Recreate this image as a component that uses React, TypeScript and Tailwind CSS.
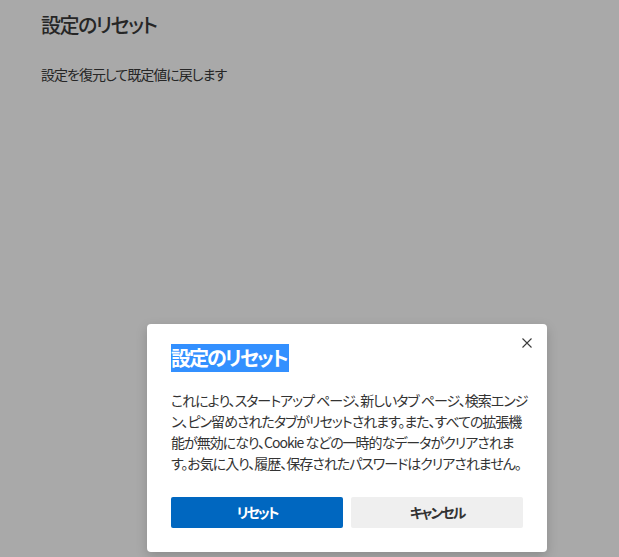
import React from "react";

const jp = "font-['Yu_Gothic_UI','Noto_Sans_CJK_JP',sans-serif] [font-feature-settings:'palt']";

export default function App() {
  return (
    <div className={`relative w-[619px] h-[557px] overflow-hidden bg-[#a9a9a9] ${jp}`}>
      <div className="pl-[41px] pt-[11px]">
        <h1 className="text-[20px] leading-[28px] font-medium tracking-[-1.5px] text-[#262626]">設定のリセット</h1>
        <p className="mt-[25px] text-[14px] leading-[20px] tracking-[-1px] text-[#262626]">設定を復元して既定値に戻します</p>
      </div>

      <div className="absolute left-[147px] top-[324px] w-[400px] rounded-[4px] bg-white px-[24px] pt-[20px] pb-[24px] shadow-[0_4px_12px_rgba(0,0,0,0.18)]">
        <button className="absolute right-[14px] top-[13px] flex h-[12px] w-[12px] items-center justify-center p-0">
          <svg width="10" height="10" viewBox="0 0 10 10" fill="none">
            <path d="M0.5 0.5L9.5 9.5M9.5 0.5L0.5 9.5" stroke="#3b3b3b" strokeWidth="1.1" />
          </svg>
        </button>
        <h2 className="inline-block bg-[#3390ff] pr-[2px] text-[20px] leading-[28px] font-bold tracking-[-2px] text-white">設定のリセット</h2>
        <div className="mt-[18px] text-[14px] leading-[21px] tracking-[-1px] text-[#333333]">
          <div className="whitespace-nowrap">これにより、スタートアップ ページ、新しいタブ ページ、検索エンジ</div>
          <div className="whitespace-nowrap">ン、ピン留めされたタブがリセットされます。また、すべての拡張機</div>
          <div className="whitespace-nowrap">能が無効になり、Cookie などの一時的なデータがクリアされま</div>
          <div className="whitespace-nowrap">す。お気に入り、履歴、保存されたパスワードはクリアされません。</div>
        </div>
        <div className="mt-[23px] flex gap-[8px]">
          <button className="h-[31px] flex-1 rounded-[2px] bg-[#0067c0] text-[14px] font-bold tracking-[-2px] text-white">リセット</button>
          <button className="h-[31px] flex-1 rounded-[2px] bg-[#efefef] text-[14px] font-bold tracking-[-2px] text-[#333333]">キャンセル</button>
        </div>
      </div>
    </div>
  );
}
